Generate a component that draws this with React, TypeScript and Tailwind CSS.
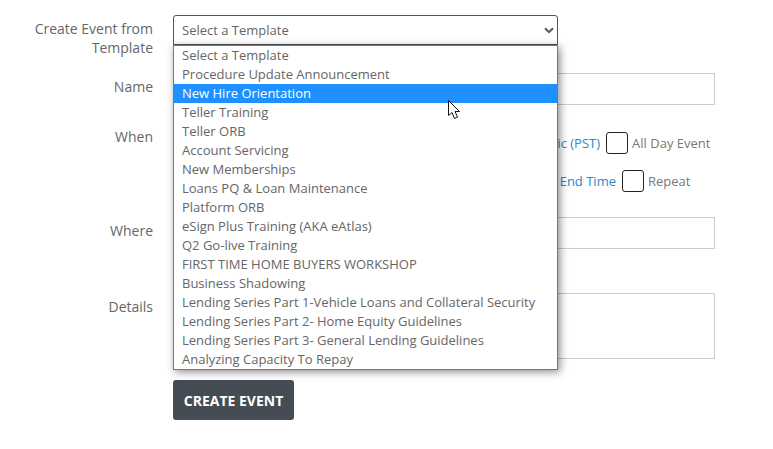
const options = [
  "Select a Template",
  "Procedure Update Announcement",
  "New Hire Orientation",
  "Teller Training",
  "Teller ORB",
  "Account Servicing",
  "New Memberships",
  "Loans PQ & Loan Maintenance",
  "Platform ORB",
  "eSign Plus Training (AKA eAtlas)",
  "Q2 Go-live Training",
  "FIRST TIME HOME BUYERS WORKSHOP",
  "Business Shadowing",
  "Lending Series Part 1-Vehicle Loans and Collateral Security",
  "Lending Series Part 2- Home Equity Guidelines",
  "Lending Series Part 3- General Lending Guidelines",
  "Analyzing Capacity To Repay",
];

function Label({ children, className = "" }: { children: React.ReactNode; className?: string }) {
  return <div className={`w-[153px] shrink-0 text-right text-[14px] leading-[19px] text-[#666666] ${className}`}>{children}</div>;
}

function Check() {
  return <span className="ml-[2px] inline-block h-[22px] w-[22px] rounded-[3px] border border-[#222222] bg-white" />;
}

export default function App() {
  return (
    <div className="relative h-[449px] w-[773px] overflow-hidden bg-white font-['Open_Sans',sans-serif]">
      <div className="flex flex-col pt-[15px]">
        <div className="flex h-[58px] gap-[20px]">
          <Label className="pt-[4px]">Create Event from Template</Label>
          <div className="relative h-[30px] w-[385px]">
            <div className="flex h-[30px] items-center justify-between rounded-t-[3px] border border-[#555555] bg-white pl-[8px] pr-[3px] pt-[1px] text-[13px] text-[#666666]">
              <span>Select a Template</span>
              <svg width="10" height="7" viewBox="0 0 10 7">
                <path d="M1 1.2 L5 5.2 L9 1.2" fill="none" stroke="#555555" strokeWidth="2" />
              </svg>
            </div>
            <div className="absolute left-0 top-[30px] z-10 h-[325px] w-[385px] border border-[#767676] bg-white shadow-[2px_2px_8px_rgba(0,0,0,0.45)]">
              {options.map((o, i) => (
                <div
                  key={o}
                  className={`h-[19px] whitespace-nowrap pl-[8px] text-[13px] leading-[19px] ${
                    i === 2 ? "bg-[#1e90ff] text-white" : "text-[#666666]"
                  }`}
                >
                  {o}
                </div>
              ))}
            </div>
          </div>
        </div>

        <div className="flex h-[32px] gap-[20px]">
          <Label className="pt-[4px]">Name</Label>
          <div className="h-[32px] w-[542px] border border-[#cccccc]" />
        </div>

        <div className="mt-[22px] flex h-[90px] gap-[20px]">
          <Label>When</Label>
          <div className="flex w-[542px] flex-col text-[13px] leading-[18px]">
            <div className="mt-[5px] flex items-center justify-end gap-[4px] pr-[4.6px]">
              <span className="text-[#2a86c8]">Pacific (PST)</span>
              <Check />
              <span className="text-[#777777]">All Day Event</span>
            </div>
            <div className="mt-[16px] flex items-center justify-end gap-[4px] pr-[24.6px]">
              <span className="text-[#2a86c8]">End Time</span>
              <Check />
              <span className="text-[#777777]">Repeat</span>
            </div>
          </div>
        </div>

        <div className="flex h-[32px] gap-[20px]">
          <Label className="pt-[4px]">Where</Label>
          <div className="h-[32px] w-[542px] border border-[#cccccc]" />
        </div>

        <div className="mt-[44px] flex h-[66px] gap-[20px]">
          <Label className="pt-[4px]">Details</Label>
          <div className="h-[66px] w-[542px] border border-[#cccccc]" />
        </div>

        <div className="mt-[21px] pl-[173px]">
          <button className="h-[40px] w-[121px] rounded-[3px] bg-[#454c53] text-[14px] font-bold text-white">CREATE EVENT</button>
        </div>
      </div>

      <svg width="14" height="20" viewBox="0 0 14 20" className="absolute left-[448px] top-[100px] z-20">
        <path d="M0.5 0.5 V15.5 L4 12.5 L6.5 18.5 L9.5 17.2 L7 11.5 H11.5 Z" fill="white" stroke="#111111" strokeWidth="1" />
      </svg>
    </div>
  );
}
